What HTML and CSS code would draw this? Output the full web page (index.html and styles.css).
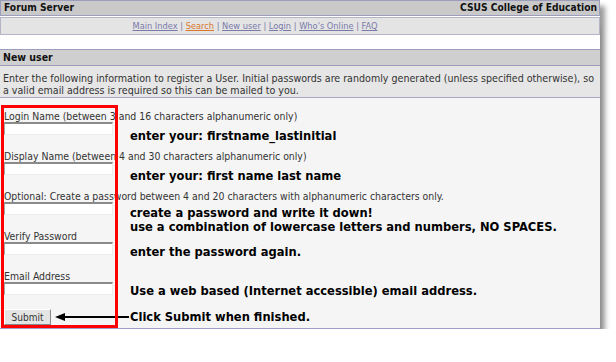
FILE: index.html
```html
<!DOCTYPE html>
<html lang="en">
<head>
  <meta charset="UTF-8">
  <title>Forum Server - New user</title>
  <link rel="stylesheet" href="styles.css">
</head>
<body>
  <div class="frame">
    <div class="topbar">
      <span>Forum Server</span>
      <span>CSUS College of Education</span>
    </div>
    <div class="nav">
      <a href="#">Main Index</a> | <a href="#" class="current">Search</a> | <a href="#">New user</a> | <a href="#">Login</a> | <a href="#">Who's Online</a> | <a href="#">FAQ</a>
    </div>
    <div class="panel">
      <div class="panel-title">New user</div>
      <div class="intro">Enter the following information to register a User. Initial passwords are randomly generated (unless specified otherwise), so a valid email address is required so this can be mailed to you.</div>
      <form class="form" action="#" method="POST">
        <div class="field">
          <label for="login">Login Name (between 3 and 16 characters alphanumeric only)</label>
          <div class="row">
            <input type="text" id="login" name="login">
            <span class="note n-low">enter your: firstname_lastinitial</span>
          </div>
        </div>
        <div class="field">
          <label for="display">Display Name (between 4 and 30 characters alphanumeric only)</label>
          <div class="row">
            <input type="text" id="display" name="display">
            <span class="note n-low">enter your: first name last name</span>
          </div>
        </div>
        <div class="field">
          <label for="pass">Optional: Create a password between 4 and 20 characters with alphanumeric characters only.</label>
          <div class="row">
            <input type="password" id="pass" name="pass">
            <span class="note n-two">create a password and write it down!<br>use a combination of lowercase letters and numbers, NO SPACES.</span>
          </div>
        </div>
        <div class="field">
          <label for="verify">Verify Password</label>
          <div class="row">
            <input type="password" id="verify" name="verify">
            <span class="note n-mid">enter the password again.</span>
          </div>
        </div>
        <div class="field last">
          <label for="email">Email Address</label>
          <div class="row">
            <input type="text" id="email" name="email">
            <span class="note n-high">Use a web based (Internet accessible) email address.</span>
          </div>
        </div>
        <div class="submit-row">
          <button type="submit">Submit</button>
          <svg class="arrow" width="74" height="10" viewBox="0 0 74 10">
            <line x1="6" y1="5" x2="74" y2="5" stroke="#000" stroke-width="2"/>
            <polygon points="0,5 10,1 10,9" fill="#000"/>
          </svg>
          <span class="note">Click Submit when finished.</span>
        </div>
        <div class="callout"></div>
      </form>
    </div>
  </div>
</body>
</html>
```

FILE: styles.css
```css
body {
  margin: 0;
  background: #fff;
  font-family: 'DejaVu Sans Condensed', 'DejaVu Sans', sans-serif;
  color: #333;
}
.frame {
  width: 600px;
  box-shadow: 6px 5px 5px -1px rgba(0, 0, 0, 0.4), 3px 22px 6px -5px rgba(0, 0, 0, 0.35);
}
.topbar {
  display: flex;
  justify-content: space-between;
  height: 14px;
  line-height: 14px;
  padding: 0 2px 0 3px;
  background: #c9c9c9;
  border: 1px solid #9d9dbd;
  font-size: 10.2px;
  font-weight: bold;
  color: #111;
}
.nav {
  margin-top: 1px;
  height: 16px;
  line-height: 16px;
  padding-right: 90px;
  background: #e4e4e4;
  border: 1px solid #b4b4c8;
  text-align: center;
  font-size: 9.2px;
  color: #7a7aaa;
}
.nav a {
  color: #7a7aaa;
}
.nav a.current {
  color: #d9772e;
}
.panel {
  margin-top: 14px;
  background: #fff;
}
.panel-title {
  height: 15px;
  line-height: 15px;
  padding-left: 3px;
  background: #cfcfcf;
  border-top: 1px solid #9d9dbd;
  border-bottom: 1px solid #9d9dbd;
  font-size: 10.5px;
  font-weight: bold;
  color: #111;
}
.intro {
  padding: 6px 3px 1px 3px;
  line-height: 12px;
  background: #e6e6e6;
  border-bottom: 1px solid #a8a8c4;
  font-size: 10.6px;
}
.form {
  position: relative;
  margin: 0;
  padding: 12px 0 3px 4px;
  background: #f5f5f5;
  border-bottom: 1px solid #9d9dc8;
}
.field {
  height: 40px;
}
.field.last {
  height: 39px;
}
.field label {
  display: block;
  height: 12px;
  line-height: 12px;
  font-size: 10.4px;
  white-space: nowrap;
}
.row {
  display: flex;
  align-items: flex-start;
  height: 13px;
}
.row input {
  flex: none;
  box-sizing: border-box;
  width: 109px;
  height: 13px;
  margin: 0;
  padding: 0;
  background: #fff;
  border: 1px solid #eee;
  border-top: 2px solid #8a8a8a;
  border-left: 1px solid #a2a2a2;
}
.note {
  margin-left: 17px;
  line-height: 16px;
  font-size: 12.8px;
  font-weight: bold;
  color: #000;
  white-space: nowrap;
}
.n-low {
  margin-top: 6px;
}
.n-two {
  margin-top: 4px;
  line-height: 14px;
}
.n-mid {
  margin-top: 2px;
}
.n-high {
  margin-top: 1px;
}
.submit-row {
  display: flex;
  align-items: center;
  height: 16px;
}
.submit-row button {
  box-sizing: border-box;
  width: 47px;
  height: 16px;
  padding: 0;
  background: #e4e4e4;
  border: 1px solid #888;
  border-top-color: #fff;
  border-left-color: #fff;
  font-family: inherit;
  font-size: 10px;
  color: #333;
}
.arrow {
  margin-left: 4px;
}
.submit-row .note {
  margin-left: 1px;
}
.callout {
  position: absolute;
  left: 1px;
  top: 7px;
  box-sizing: border-box;
  width: 117px;
  height: 223px;
  border: 3px solid #f00;
}
```
